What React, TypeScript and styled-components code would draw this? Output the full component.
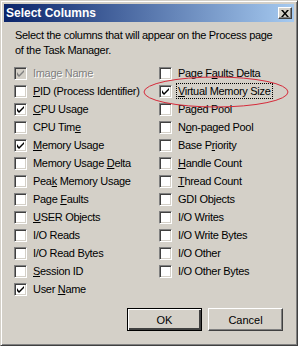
import React from "react";
import styled, { createGlobalStyle } from "styled-components";

const GlobalStyle = createGlobalStyle`
  html, body {
    margin: 0;
    padding: 0;
    background: #d4d0c8;
  }
  body {
    font-family: "Liberation Sans", Arial, sans-serif;
    font-size: 11px;
    color: #000;
  }
`;

const Window = styled.div`
  position: relative;
  width: 298px;
  height: 346px;
  box-sizing: border-box;
  background: #d4d0c8;
  border: 1px solid;
  border-color: #d4d0c8 #404040 #404040 #d4d0c8;
  box-shadow: inset 1px 1px 0 #fff, inset -1px -1px 0 #808080;
  padding: 3px;
  display: flex;
  flex-direction: column;
  overflow: hidden;
`;

const TitleBar = styled.div`
  height: 18px;
  display: flex;
  align-items: center;
  justify-content: space-between;
  padding: 0 2px 0 2px;
  background: linear-gradient(to right, #0a246a, #a6caf0);
`;

const Title = styled.span`
  color: #fff;
  font-family: "Liberation Sans", Arial, sans-serif;
  font-weight: bold;
  font-size: 12px;
`;

const CloseButton = styled.div`
  width: 14px;
  height: 12px;
  box-sizing: border-box;
  background: #d4d0c8;
  border: 1px solid;
  border-color: #fff #404040 #404040 #fff;
  box-shadow: inset -1px -1px 0 #808080;
  display: flex;
  align-items: center;
  justify-content: center;
`;

const Body = styled.div`
  flex: 1;
  display: flex;
  flex-direction: column;
  padding: 6px 11px 11px 10px;
  letter-spacing: -0.3px;
`;

const Description = styled.p`
  margin: 0 0 0 1px;
  line-height: 15px;
  white-space: nowrap;
`;

const Columns = styled.div`
  margin-top: 6px;
  display: grid;
  grid-template-columns: 145px 1fr;
`;

const Column = styled.div`
  display: flex;
  flex-direction: column;
`;

const Row = styled.div`
  height: 18px;
  display: flex;
  align-items: center;
`;

const Box = styled.span<{ $disabled?: boolean }>`
  width: 13px;
  height: 13px;
  box-sizing: border-box;
  flex: none;
  border: 1px solid;
  border-color: #808080 #fff #fff #808080;
  box-shadow: inset 1px 1px 0 #404040, inset -1px -1px 0 #d4d0c8;
  background: ${(p) => (p.$disabled ? "#d4d0c8" : "#fff")};
  display: flex;
  align-items: center;
  justify-content: center;
`;

const Label = styled.span<{ $disabled?: boolean; $focus?: boolean }>`
  margin-left: 4px;
  padding: 0 1px;
  white-space: nowrap;
  line-height: 14px;
  border: 1px dotted ${(p) => (p.$focus ? "#000" : "transparent")};
  color: ${(p) => (p.$disabled ? "#808080" : "#000")};
  text-shadow: ${(p) => (p.$disabled ? "1px 1px 0 #fff" : "none")};
  u {
    text-decoration: underline;
    text-underline-offset: 1px;
  }
`;

const Buttons = styled.div`
  margin-top: auto;
  display: flex;
  justify-content: flex-end;
  gap: 6px;
  letter-spacing: 0;
`;

const Button = styled.div<{ $default?: boolean }>`
  width: 75px;
  height: 23px;
  box-sizing: border-box;
  display: flex;
  align-items: center;
  justify-content: center;
  background: #d4d0c8;
  border: 1px solid;
  border-color: ${(p) => (p.$default ? "#000" : "#fff #404040 #404040 #fff")};
  box-shadow: ${(p) =>
    p.$default
      ? "inset 1px 1px 0 #fff, inset -2px -2px 0 #404040, inset -1px -1px 0 #808080"
      : "inset -1px -1px 0 #808080"};
`;

const Annotation = styled.svg`
  position: absolute;
  left: 0;
  top: 0;
  pointer-events: none;
`;

type Item = { pre: string; key?: string; post?: string; checked?: boolean; disabled?: boolean; focus?: boolean };

const left: Item[] = [
  { pre: "Image Name", checked: true, disabled: true },
  { pre: "", key: "P", post: "ID (Process Identifier)" },
  { pre: "", key: "C", post: "PU Usage", checked: true },
  { pre: "CPU Tim", key: "e", post: "" },
  { pre: "", key: "M", post: "emory Usage", checked: true },
  { pre: "Memory Usage ", key: "D", post: "elta" },
  { pre: "Pea", key: "k", post: " Memory Usage" },
  { pre: "Page ", key: "F", post: "aults" },
  { pre: "", key: "U", post: "SER Objects" },
  { pre: "I/O Reads" },
  { pre: "I/O Read Bytes" },
  { pre: "", key: "S", post: "ession ID" },
  { pre: "User ", key: "N", post: "ame", checked: true },
];

const right: Item[] = [
  { pre: "Page F", key: "a", post: "ults Delta" },
  { pre: "", key: "V", post: "irtual Memory Size", checked: true, focus: true },
  { pre: "Paged Pool" },
  { pre: "N", key: "o", post: "n-paged Pool" },
  { pre: "Base P", key: "r", post: "iority" },
  { pre: "", key: "H", post: "andle Count" },
  { pre: "", key: "T", post: "hread Count" },
  { pre: "GDI Objects" },
  { pre: "I/O Writes" },
  { pre: "I/O Write Bytes" },
  { pre: "I/O Other" },
  { pre: "I/O Other Bytes" },
];

const Check = ({ color }: { color: string }) => (
  <svg width="7" height="7" viewBox="0 0 7 7">
    <path d="M0 2v3l2 2 5-5V0l-5 5z" fill={color} />
  </svg>
);

const Option = ({ item }: { item: Item }) => (
  <Row>
    <Box $disabled={item.disabled}>{item.checked && <Check color={item.disabled ? "#808080" : "#000"} />}</Box>
    <Label $disabled={item.disabled} $focus={item.focus}>
      {item.pre}
      {item.key && <u>{item.key}</u>}
      {item.post}
    </Label>
  </Row>
);

export default function App() {
  return (
    <>
      <GlobalStyle />
      <Window>
        <TitleBar>
          <Title>Select Columns</Title>
          <CloseButton>
            <svg width="8" height="7" viewBox="0 0 8 7">
              <path d="M0 0h2l2 2.5L6 0h2L5 3.5 8 7H6L4 4.5 2 7H0l3-3.5z" fill="#000" />
            </svg>
          </CloseButton>
        </TitleBar>
        <Body>
          <Description>
            Select the columns that will appear on the Process page
            <br />
            of the Task Manager.
          </Description>
          <Columns>
            <Column>
              {left.map((it, i) => (
                <Option key={i} item={it} />
              ))}
            </Column>
            <Column>
              {right.map((it, i) => (
                <Option key={i} item={it} />
              ))}
            </Column>
          </Columns>
          <Buttons>
            <Button $default>OK</Button>
            <Button>Cancel</Button>
          </Buttons>
        </Body>
        <Annotation width="298" height="346">
          <ellipse cx="215" cy="91" rx="72" ry="15" fill="none" stroke="#d62a3a" strokeWidth="1" />
        </Annotation>
      </Window>
    </>
  );
}
